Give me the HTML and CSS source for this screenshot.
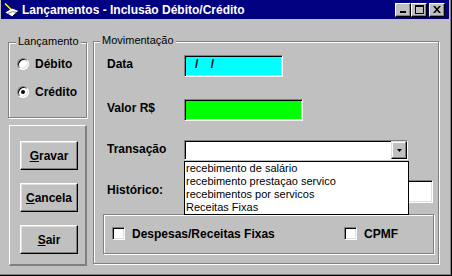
FILE: index.html
```html
<!DOCTYPE html>
<html lang="pt">
<head>
  <meta charset="UTF-8">
  <title>Lançamentos - Inclusão Débito/Crédito</title>
  <link rel="stylesheet" href="styles.css">
</head>
<body>

  <div class="window">
    <div class="titlebar">
      <svg class="app-icon" width="16" height="16" viewBox="0 0 16 16">
        <path d="M2 1.5 L8.5 8" stroke="#ffff00" stroke-width="1.6" fill="none"/>
        <path d="M2.5 10.5 L9 6.5 L15.5 9 L9.5 14.5 Z" fill="#ffffff"/>
        <path d="M5 11.5 L9.5 9.5 L13.5 10.5" stroke="#808080" fill="none"/>
        <path d="M9.5 14.5 L15.5 9" stroke="#000000" fill="none"/>
      </svg>
      <span class="title">Lançamentos - Inclusão Débito/Crédito</span>
      <div class="caption-buttons">
        <span class="cap-btn cap-min"><span class="glyph-min"></span></span>
        <span class="cap-btn"><span class="glyph-max"></span></span>
        <span class="cap-btn cap-close">
          <svg width="8" height="7" viewBox="0 0 8 7">
            <path d="M0 0h2l2 2.3L6 0h2L5 3.5 8 7H6L4 4.7 2 7H0l3-3.5z" fill="#000"/>
          </svg>
        </span>
      </div>
    </div>

    <div class="client">
      <div class="side">
        <div class="group group-tipo">
          <span class="legend">Lançamento</span>
          <div class="radio-row"><span class="radio"></span>Débito</div>
          <div class="radio-row"><span class="radio checked"></span>Crédito</div>
        </div>
        <div class="panel">
          <button class="btn"><u>G</u>ravar</button>
          <button class="btn"><u>C</u>ancela</button>
          <button class="btn"><u>S</u>air</button>
        </div>
      </div>

      <div class="group group-mov">
        <span class="legend">Movimentação</span>
        <div class="form">
          <span class="label">Data</span>
          <div class="field field-data">/&nbsp;&nbsp;&nbsp;/</div>

          <span class="label">Valor R$</span>
          <div class="field field-valor"></div>

          <span class="label">Transação</span>
          <div class="combo">
            <span class="combo-btn">
              <svg width="5" height="3" viewBox="0 0 5 3"><path d="M0 0h5L2.5 3z" fill="#000"/></svg>
            </span>
            <ul class="dropdown">
              <li>recebimento de salário</li>
              <li>recebimento prestaçao servico</li>
              <li>recebimentos por servicos</li>
              <li>Receitas Fixas</li>
            </ul>
          </div>

          <span class="label label-hist">Histórico:</span>
          <div class="field field-hist"></div>
        </div>

        <div class="group group-check">
          <div class="check-row">
            <div class="check-item"><span class="checkbox"></span>Despesas/Receitas Fixas</div>
            <div class="check-item"><span class="checkbox"></span>CPMF</div>
          </div>
        </div>
      </div>
    </div>
  </div>

</body>
</html>
```

FILE: styles.css
```css
* {
  box-sizing: border-box;
}
body {
  margin: 0;
  background: #c0c0c0;
  font-family: "Liberation Sans", Arial, sans-serif;
  font-size: 11px;
  color: #000;
}

/* window frame */
.window {
  width: 452px;
  height: 276px;
  padding: 0 2px 2px 1px;
  background: #c0c0c0;
  border-right: 1px solid #000;
  border-bottom: 1px solid #000;
  box-shadow: inset -1px -1px 0 #808080;
}
.titlebar {
  height: 19px;
  background: #000080;
  display: flex;
  align-items: center;
  padding: 0 4px 0 2px;
}
.app-icon {
  display: block;
  flex: none;
}
.title {
  margin-left: 3px;
  padding-top: 1px;
  color: #fff;
  font-weight: bold;
  font-size: 12px;
  white-space: nowrap;
}
.caption-buttons {
  margin-left: auto;
  display: flex;
}
.cap-btn {
  width: 16px;
  height: 14px;
  background: #c0c0c0;
  border-top: 1px solid #fff;
  border-left: 1px solid #fff;
  border-right: 1px solid #000;
  border-bottom: 1px solid #000;
  box-shadow: inset -1px -1px 0 #808080;
  display: flex;
  align-items: center;
  justify-content: center;
}
.cap-btn svg {
  display: block;
}
.cap-min {
  align-items: flex-end;
  justify-content: flex-start;
  padding: 0 0 3px 4px;
}
.glyph-min {
  width: 6px;
  height: 2px;
  background: #000;
}
.glyph-max {
  width: 9px;
  height: 9px;
  border: 1px solid #000;
  border-top-width: 2px;
}
.cap-close {
  margin-left: 2px;
}

/* client area */
.client {
  display: flex;
  gap: 6px;
  padding: 22px 0 0 7px;
}
.side {
  width: 79px;
}

/* etched group box */
.group {
  border: 1px solid #808080;
  box-shadow: 1px 1px 0 #fff, inset 1px 1px 0 #fff;
}
.legend {
  display: table;
  margin: -8px 0 0 6px;
  padding: 0 2px;
  line-height: 13px;
  background: #c0c0c0;
}
.group-tipo {
  margin-top: 1px;
  height: 76px;
}
.group-tipo .legend {
  margin-left: 7px;
}
.radio-row {
  display: flex;
  align-items: center;
  gap: 6px;
  height: 14px;
  margin-top: 9px;
  padding-left: 8px;
  font-size: 12px;
  font-weight: bold;
}
.radio-row + .radio-row {
  margin-top: 14px;
}
.radio {
  width: 12px;
  height: 12px;
  border-radius: 50%;
  background: #fff;
  border: 1px solid;
  border-color: #808080 #fff #fff #808080;
  box-shadow: inset 1px 1px 0 #000, inset -1px -1px 0 #dfdfdf;
  display: flex;
  align-items: center;
  justify-content: center;
}
.radio.checked::after {
  content: "";
  width: 4px;
  height: 4px;
  border-radius: 50%;
  background: #000;
}

/* button panel */
.panel {
  margin: 7px 0 0 1px;
  width: 78px;
  height: 141px;
  border-top: 1px solid #fff;
  border-left: 1px solid #fff;
  border-right: 2px solid #808080;
  border-bottom: 2px solid #808080;
  padding: 15px 0 0 10px;
  display: flex;
  flex-direction: column;
  gap: 13px;
}
.btn {
  width: 58px;
  height: 29px;
  padding: 0;
  background: #c0c0c0;
  border-top: 1px solid #fff;
  border-left: 1px solid #fff;
  border-right: 1px solid #000;
  border-bottom: 1px solid #000;
  box-shadow: inset -1px -1px 0 #808080, inset 1px 1px 0 #dfdfdf;
  font-family: "Liberation Sans", Arial, sans-serif;
  font-size: 12px;
  font-weight: bold;
  color: #000;
}

/* movimentacao */
.group-mov {
  width: 346px;
  height: 223px;
}
.form {
  display: grid;
  grid-template-columns: 77px auto;
  grid-template-rows: 44px 41px 40px 23px;
  align-items: start;
  margin-top: 8px;
  padding-left: 13px;
}
.label {
  font-size: 12px;
  font-weight: bold;
  line-height: 14px;
  margin-top: 2px;
}
.label-hist {
  margin-top: 3px;
}
.field {
  height: 22px;
  background: #fff;
  border: 1px solid;
  border-color: #808080 #fff #fff #808080;
  box-shadow: inset 1px 1px 0 #000, inset -1px -1px 0 #dfdfdf;
}
.field-data {
  width: 99px;
  background: #00ffff;
  padding: 1px 0 0 10px;
  font-size: 12px;
  font-weight: bold;
  line-height: 14px;
  letter-spacing: 0.6px;
}
.field-valor {
  width: 119px;
  background: #00ff00;
}
.field-hist {
  width: 249px;
  height: 23px;
}
.combo {
  position: relative;
  width: 224px;
  height: 20px;
  background: #fff;
  border: 1px solid;
  border-color: #808080 #fff #fff #808080;
  box-shadow: inset 1px 1px 0 #000;
  display: flex;
  justify-content: flex-end;
}
.combo-btn {
  width: 16px;
  height: 18px;
  background: #c0c0c0;
  border-top: 1px solid #dfdfdf;
  border-left: 1px solid #dfdfdf;
  border-right: 1px solid #000;
  border-bottom: 1px solid #000;
  box-shadow: inset -1px -1px 0 #808080, inset 1px 1px 0 #fff;
  display: flex;
  align-items: center;
  justify-content: center;
}
.combo-btn svg {
  display: block;
  margin-left: 1px;
}
.dropdown {
  position: absolute;
  top: 20px;
  left: -1px;
  z-index: 2;
  width: 225px;
  margin: 0;
  padding: 0;
  list-style: none;
  background: #fff;
  border: 1px solid #000;
}
.dropdown li {
  height: 13px;
  line-height: 13px;
  padding-left: 1px;
  white-space: nowrap;
}

/* checkbox strip */
.group-check {
  margin: 11px 0 0 9px;
  width: 331px;
  height: 40px;
}
.check-row {
  display: grid;
  grid-template-columns: 232px auto;
  padding: 12px 0 0 8px;
}
.check-item {
  display: flex;
  align-items: center;
  gap: 7px;
  height: 13px;
  font-size: 12px;
  font-weight: bold;
}
.checkbox {
  width: 13px;
  height: 13px;
  background: #fff;
  border: 1px solid;
  border-color: #808080 #fff #fff #808080;
  box-shadow: inset 1px 1px 0 #000, inset -1px -1px 0 #dfdfdf;
}
```
